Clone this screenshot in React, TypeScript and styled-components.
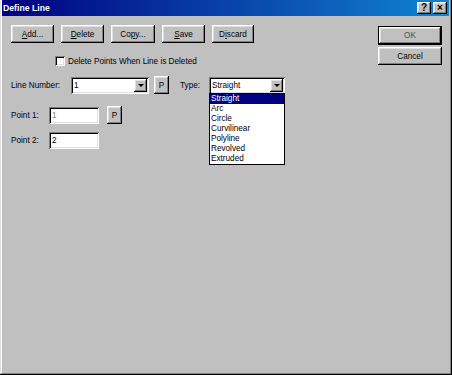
import { createGlobalStyle, styled } from "styled-components";

const GlobalStyle = createGlobalStyle`
  html, body {
    margin: 0;
    padding: 0;
    background: #c0c0c0;
  }
  body {
    font-family: "Liberation Sans", Arial, sans-serif;
    font-size: 8.2px;
    color: #000;
  }
`;

const raised = `
  box-shadow: inset -1px -1px #000, inset 1px 1px #fff,
    inset -2px -2px #808080, inset 2px 2px #dfdfdf;
`;

const sunken = `
  box-shadow: inset 1px 1px #808080, inset -1px -1px #fff,
    inset 2px 2px #000, inset -2px -2px #dfdfdf;
`;

const Window = styled.div`
  width: 452px;
  height: 375px;
  box-sizing: border-box;
  padding: 0 3px 3px 2px;
  background: #c0c0c0;
  display: flex;
  flex-direction: column;
  box-shadow: inset -1px -1px #000, inset 1px 0 #dfdfdf,
    inset -2px -2px #808080, inset 2px 0 #fff;
`;

const TitleBar = styled.div`
  height: 16px;
  display: flex;
  align-items: center;
  justify-content: space-between;
  padding: 0 2px 0 1px;
  background: linear-gradient(to right, #000080, #1084d0);
`;

const Title = styled.span`
  color: #fff;
  font-weight: bold;
  font-size: 8.7px;
`;

const TitleButtons = styled.div`
  display: flex;
  gap: 2px;
`;

const CaptionButton = styled.div`
  width: 14px;
  height: 12px;
  background: #c0c0c0;
  ${raised}
  display: flex;
  align-items: center;
  justify-content: center;
  font-weight: bold;
  font-size: 10px;
  line-height: 1;
`;

const Body = styled.div`
  flex: 1;
  display: flex;
  justify-content: space-between;
  padding: 9px 7px 0 9px;
`;

const Main = styled.div`
  display: flex;
  flex-direction: column;
`;

const ButtonRow = styled.div`
  display: flex;
  gap: 7px;
`;

const Button = styled.div<{ $w?: number; $h?: number; $default?: boolean }>`
  width: ${(p) => p.$w ?? 43}px;
  height: ${(p) => p.$h ?? 18}px;
  box-sizing: border-box;
  background: #c0c0c0;
  display: flex;
  align-items: center;
  justify-content: center;
  ${raised}
  ${(p) =>
    p.$default &&
    `box-shadow: inset 0 0 0 1px #000, inset -2px -2px #000, inset 2px 2px #fff,
      inset -3px -3px #808080, inset 3px 3px #dfdfdf;`}
`;

const Key = styled.u`
  text-decoration: underline;
`;

const CheckRow = styled.label`
  display: flex;
  align-items: center;
  gap: 3px;
  margin: 13px 0 0 44px;
`;

const CheckBox = styled.span`
  width: 10px;
  height: 10px;
  background: #fff;
  ${sunken}
`;

const FieldRow = styled.div<{ $top: number }>`
  display: flex;
  align-items: center;
  margin-top: ${(p) => p.$top}px;
`;

const Label = styled.span<{ $w: number }>`
  width: ${(p) => p.$w}px;
`;

const Field = styled.div<{ $w: number; $dim?: boolean }>`
  width: ${(p) => p.$w}px;
  height: 17px;
  box-sizing: border-box;
  background: #fff;
  ${sunken}
  display: flex;
  align-items: center;
  padding-left: 3px;
  color: ${(p) => (p.$dim ? "#808080" : "#000")};
`;

const Combo = styled(Field)`
  justify-content: space-between;
  padding: 2px;
  padding-left: 3px;
`;

const ArrowButton = styled.div`
  width: 13px;
  height: 13px;
  box-sizing: border-box;
  background: #c0c0c0;
  ${raised}
  display: flex;
  align-items: center;
  justify-content: center;
`;

const Arrow = styled.span`
  width: 0;
  height: 0;
  border-left: 3px solid transparent;
  border-right: 3px solid transparent;
  border-top: 3px solid #000;
`;

const SmallButton = styled(Button)`
  margin-left: ${(p) => (p.$w === 15 ? 0 : 0)}px;
`;

const Gap = styled.span<{ $w: number }>`
  display: inline-block;
  width: ${(p) => p.$w}px;
`;

const TypeBox = styled.div`
  position: relative;
`;

const DropList = styled.ul`
  position: absolute;
  left: 0;
  top: 16px;
  width: 76px;
  box-sizing: border-box;
  margin: 0;
  padding: 0;
  list-style: none;
  background: #fff;
  border: 1px solid #000;
`;

const DropItem = styled.li<{ $sel?: boolean }>`
  height: 10px;
  line-height: 10px;
  padding-left: 1px;
  background: ${(p) => (p.$sel ? "#000080" : "transparent")};
  color: ${(p) => (p.$sel ? "#fff" : "#000")};
`;

const Side = styled.div`
  display: flex;
  flex-direction: column;
  gap: 2px;
  padding-top: 1px;
`;

const Dim = styled.span`
  color: #505050;
`;

const types = [
  "Straight",
  "Arc",
  "Circle",
  "Curvilinear",
  "Polyline",
  "Revolved",
  "Extruded",
];

export default function App() {
  return (
    <>
      <GlobalStyle />
      <Window>
        <TitleBar>
          <Title>Define Line</Title>
          <TitleButtons>
            <CaptionButton>?</CaptionButton>
            <CaptionButton>×</CaptionButton>
          </TitleButtons>
        </TitleBar>
        <Body>
          <Main>
            <ButtonRow>
              <Button>
                <Key>A</Key>dd...
              </Button>
              <Button>
                <Key>D</Key>elete
              </Button>
              <Button $w={44}>
                Co<Key>p</Key>y...
              </Button>
              <Button>
                <Key>S</Key>ave
              </Button>
              <Button $w={42}>
                D<Key>i</Key>scard
              </Button>
            </ButtonRow>
            <CheckRow>
              <CheckBox />
              Delete Points When Line is Deleted
            </CheckRow>
            <FieldRow $top={10}>
              <Label $w={60}>Line Number:</Label>
              <Combo $w={78}>
                1
                <ArrowButton>
                  <Arrow />
                </ArrowButton>
              </Combo>
              <Gap $w={5} />
              <SmallButton $w={15} $h={18}>
                P
              </SmallButton>
              <Gap $w={11} />
              <Label $w={29}>Type:</Label>
              <TypeBox>
                <Combo $w={76}>
                  Straight
                  <ArrowButton>
                    <Arrow />
                  </ArrowButton>
                </Combo>
                <DropList>
                  {types.map((t, i) => (
                    <DropItem key={t} $sel={i === 0}>
                      {t}
                    </DropItem>
                  ))}
                </DropList>
              </TypeBox>
            </FieldRow>
            <FieldRow $top={12}>
              <Label $w={38}>Point 1:</Label>
              <Field $w={50} $dim>
                1
              </Field>
              <Gap $w={8} />
              <SmallButton $w={15} $h={18}>
                P
              </SmallButton>
            </FieldRow>
            <FieldRow $top={8}>
              <Label $w={38}>Point 2:</Label>
              <Field $w={50}>2</Field>
            </FieldRow>
          </Main>
          <Side>
            <Button $w={64} $h={19} $default>
              <Dim>OK</Dim>
            </Button>
            <Button $w={64} $h={18}>
              Cancel
            </Button>
          </Side>
        </Body>
      </Window>
    </>
  );
}
